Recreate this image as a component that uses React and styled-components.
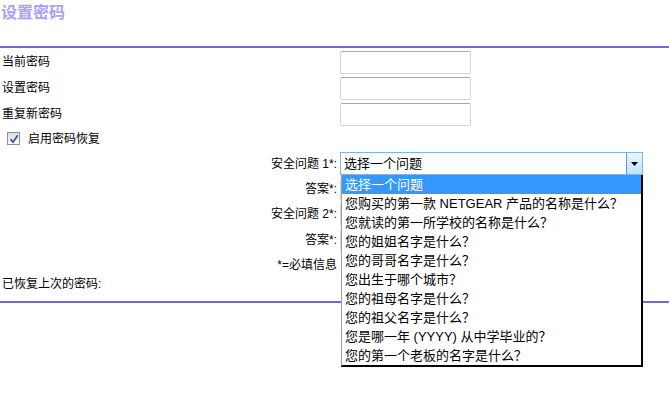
import styled, { createGlobalStyle } from "styled-components";

const GlobalStyle = createGlobalStyle`
  body {
    margin: 0;
    background: #fff;
    font-family: Tahoma, "Liberation Sans", "Noto Sans CJK SC", sans-serif;
    color: #000;
  }
`;

const Page = styled.div`
  width: 669px;
  height: 393px;
  overflow: hidden;
`;

const Header = styled.div`
  height: 46px;
`;

const Title = styled.h1`
  margin: 0;
  padding: 3px 0 0 1px;
  font-size: 16px;
  line-height: 20px;
  font-weight: bold;
  color: #a7a1f7;
`;

const Rule = styled.div`
  height: 2px;
  background: #716ad9;
`;

const Form = styled.div`
  padding-top: 1px;
`;

const Row = styled.div`
  display: grid;
  grid-template-columns: 340px 1fr;
  align-items: center;
  height: ${(p) => p.$h || 25}px;
`;

const Label = styled.div`
  font-size: 12px;
  line-height: 16px;
  padding: ${(p) => (p.$right ? "0 3px 0 0" : "0 0 0 2px")};
  text-align: ${(p) => (p.$right ? "right" : "left")};
  white-space: nowrap;
`;

const TextInput = styled.input`
  box-sizing: border-box;
  width: 131px;
  height: 23px;
  border: 1px solid #d4d4d4;
  border-top-color: #a9a9a9;
  border-radius: 2px;
  background: #fff;
  margin: 0;
  padding: 0 3px;
`;

const CheckRow = styled.label`
  display: flex;
  align-items: center;
  gap: 8px;
  height: 23px;
  padding-left: 7px;
  font-size: 12px;
  line-height: 16px;
`;

const Box = styled.span`
  box-sizing: border-box;
  width: 13px;
  height: 13px;
  border: 1px solid #8f8f9d;
  background: linear-gradient(#dcdcdc, #fbfbfb);
  display: flex;
  align-items: center;
  justify-content: center;
`;

const SelectWrap = styled.div`
  position: relative;
  width: 303px;
`;

const SelectBox = styled.div`
  box-sizing: border-box;
  height: 23px;
  border: 1px solid #7eb4ea;
  display: flex;
  align-items: center;
  background: #fff;
`;

const SelectValue = styled.span`
  flex: 1;
  font-size: 13px;
  line-height: 17px;
  padding-left: 3px;
`;

const ArrowButton = styled.span`
  box-sizing: border-box;
  width: 16px;
  height: 21px;
  border-left: 1px solid #569de5;
  background: linear-gradient(#eaf6fd, #bee6fd);
  display: flex;
  align-items: center;
  justify-content: center;
`;

const Dropdown = styled.ul`
  position: absolute;
  top: 23px;
  left: 1px;
  width: 302px;
  box-sizing: border-box;
  margin: 0;
  padding: 0;
  list-style: none;
  background: #fff;
  border-left: 1px solid #a0a0a0;
  border-right: 2px solid #000;
  border-bottom: 2px solid #000;
  z-index: 2;
`;

const Option = styled.li`
  height: 19px;
  font-size: 13px;
  line-height: 19px;
  padding-left: 3px;
  white-space: nowrap;
  background: ${(p) => (p.$active ? "#3399ff" : "transparent")};
  color: ${(p) => (p.$active ? "#fff" : "#000")};
`;

const Note = styled.div`
  font-size: 12px;
  line-height: 16px;
  padding: 0 0 0 2px;
  margin: 0 0 9px;
`;

const questions = [
  "选择一个问题",
  "您购买的第一款 NETGEAR 产品的名称是什么？",
  "您就读的第一所学校的名称是什么？",
  "您的姐姐名字是什么？",
  "您的哥哥名字是什么？",
  "您出生于哪个城市？",
  "您的祖母名字是什么？",
  "您的祖父名字是什么？",
  "您是哪一年 (YYYY) 从中学毕业的？",
  "您的第一个老板的名字是什么？",
];

export default function App() {
  return (
    <Page>
      <GlobalStyle />
      <Header>
        <Title>设置密码</Title>
      </Header>
      <Rule />
      <Form>
        <Row $h={26}>
          <Label>当前密码</Label>
          <TextInput type="password" />
        </Row>
        <Row $h={26}>
          <Label>设置密码</Label>
          <TextInput type="password" />
        </Row>
        <Row $h={26}>
          <Label>重复新密码</Label>
          <TextInput type="password" />
        </Row>
        <CheckRow>
          <Box>
            <svg width="10" height="10" viewBox="0 0 10 10">
              <path d="M1.5 5.2 L4 8 L8.8 1.2" fill="none" stroke="#3b57b5" strokeWidth="1.8" />
            </svg>
          </Box>
          启用密码恢复
        </CheckRow>
        <Row $h={27}>
          <Label $right>安全问题 1*:</Label>
          <SelectWrap>
            <SelectBox>
              <SelectValue>选择一个问题</SelectValue>
              <ArrowButton>
                <svg width="7" height="4" viewBox="0 0 7 4">
                  <path d="M0 0 H7 L3.5 4 Z" fill="#000" />
                </svg>
              </ArrowButton>
            </SelectBox>
            <Dropdown>
              {questions.map((q, i) => (
                <Option key={q} $active={i === 0}>
                  {q}
                </Option>
              ))}
            </Dropdown>
          </SelectWrap>
        </Row>
        <Row $h={24}>
          <Label $right>答案*:</Label>
          <TextInput />
        </Row>
        <Row $h={26}>
          <Label $right>安全问题 2*:</Label>
          <TextInput />
        </Row>
        <Row $h={26}>
          <Label $right>答案*:</Label>
          <TextInput />
        </Row>
        <Row $h={23}>
          <Label $right>*=必填信息</Label>
          <span />
        </Row>
        <Note>已恢复上次的密码:</Note>
      </Form>
      <Rule />
    </Page>
  );
}
